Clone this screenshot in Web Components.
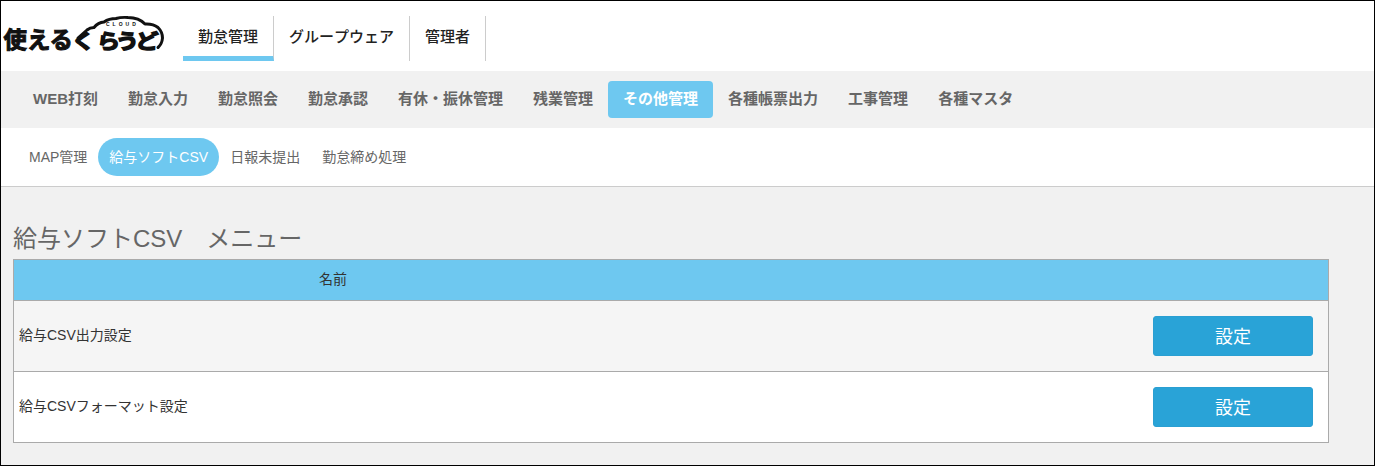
<!DOCTYPE html>
<html lang="ja">
<head>
<meta charset="utf-8">
<title>給与ソフトCSV メニュー</title>
<style>
  html, body { margin: 0; padding: 0; height: 100%; }
  body {
    font-family: "Liberation Sans", "Noto Sans CJK JP", sans-serif;
    background: #f1f1f1;
    color: #333;
  }
</style>
</head>
<body>
<app-shell>
  <app-header slot="header">
    <app-logo slot="logo"></app-logo>
    <header-tab active>勤怠管理</header-tab>
    <header-tab>グループウェア</header-tab>
    <header-tab>管理者</header-tab>
  </app-header>
  <main-nav slot="header">
    <main-nav-item>WEB打刻</main-nav-item>
    <main-nav-item>勤怠入力</main-nav-item>
    <main-nav-item>勤怠照会</main-nav-item>
    <main-nav-item>勤怠承認</main-nav-item>
    <main-nav-item>有休・振休管理</main-nav-item>
    <main-nav-item>残業管理</main-nav-item>
    <main-nav-item active>その他管理</main-nav-item>
    <main-nav-item>各種帳票出力</main-nav-item>
    <main-nav-item>工事管理</main-nav-item>
    <main-nav-item>各種マスタ</main-nav-item>
  </main-nav>
  <sub-nav slot="header">
    <sub-nav-item>MAP管理</sub-nav-item>
    <sub-nav-item active>給与ソフトCSV</sub-nav-item>
    <sub-nav-item>日報未提出</sub-nav-item>
    <sub-nav-item>勤怠締め処理</sub-nav-item>
  </sub-nav>
  <menu-panel heading="給与ソフトCSV　メニュー" column="名前">
    <menu-row>給与CSV出力設定</menu-row>
    <menu-row alt>給与CSVフォーマット設定</menu-row>
  </menu-panel>
</app-shell>

<script>
// small helper, every element gets an open shadow root from a string
function define(name, html) {
  customElements.define(name, class extends HTMLElement {
    constructor() {
      super();
      this.attachShadow({mode: 'open'}).innerHTML = html;
    }
  });
}

define('app-shell', `
  <style>
    :host {
      display: flex;
      flex-direction: column;
      box-sizing: border-box;
      height: 466px;
      border: 1px solid #000;
      overflow: hidden;
      background: #f1f1f1;
    }
  </style>
  <slot name="header"></slot>
  <slot></slot>`);

define('app-header', `
  <style>
    :host {
      display: flex;
      align-items: flex-start;
      height: 70px;
      background: #fff;
    }
    ::slotted(app-logo) { margin: 8px 20px 0 3px; }
    .tabs { display: flex; margin-top: 15px; }
  </style>
  <slot name="logo"></slot>
  <div class="tabs"><slot></slot></div>`);

define('app-logo', `
  <style>
    :host { display: block; width: 159px; height: 52px; flex: none; }
    svg { display: block; overflow: visible; }
    text { font-family: "Noto Sans CJK JP", sans-serif; font-weight: 700; fill: #111; }
  </style>
  <svg width="159" height="52" viewBox="0 -8 159 52">
    <path d="M74 21 L83 13 Q86 10.500 90 10.500 Q94 5.500 100 5 Q105 1.500 112 1.500 Q117 0 124 0.500 Q135 0.500 141 7 Q149 6.500 154 10.500 Q158.500 15 158.500 21 Q158 27 154 30.500"
      fill="#fff" stroke="#111" stroke-width="3" stroke-linejoin="round" stroke-linecap="round"/>
    <text x="-0.500" y="31" font-size="23" stroke="#111" stroke-width="1" textLength="69.500" lengthAdjust="spacingAndGlyphs">使える</text>
    <text transform="translate(71 31.500) scale(1.1 .95)" x="-3 20 37 55" y="0" font-size="21" stroke="#111" stroke-width="1.500">くらうど</text>
    <text x="102" y="9" font-size="5" letter-spacing="3" style="font-family:'Liberation Sans',sans-serif">CLOUD</text>
  </svg>`);

define('header-tab', `
  <style>
    :host {
      display: block;
      box-sizing: border-box;
      height: 45px;
      padding: 0 15px;
      border-right: 1px solid #ccc;
      font: 500 15px/40px "Noto Sans CJK JP", sans-serif;
      font-kerning: none;
      color: #222;
      white-space: nowrap;
    }
    :host([active]) { border-bottom: 5px solid #6ec8f0; }
  </style>
  <slot></slot>`);

define('main-nav', `
  <style>
    :host {
      display: flex;
      align-items: center;
      box-sizing: border-box;
      height: 57px;
      padding: 0 0 0 17px;
      background: #f1f1f1;
    }
  </style>
  <slot></slot>`);

define('main-nav-item', `
  <style>
    :host {
      display: block;
      height: 37px;
      padding: 0 15px;
      border-radius: 4px;
      font: 700 15px/35px "Liberation Sans", "Noto Sans CJK JP", sans-serif;
      color: #666;
      white-space: nowrap;
    }
    :host([active]) { background: #6ec8f0; color: #fff; }
  </style>
  <slot></slot>`);

define('sub-nav', `
  <style>
    :host {
      display: flex;
      align-items: center;
      box-sizing: border-box;
      height: 59px;
      padding: 0 0 1px 17px;
      background: #fff;
      border-bottom: 1px solid #ccc;
    }
  </style>
  <slot></slot>`);

define('sub-nav-item', `
  <style>
    :host {
      display: block;
      height: 38px;
      padding: 0 11px;
      border-radius: 19px;
      font: 400 14px/38px "Liberation Sans", "Noto Sans CJK JP", sans-serif;
      color: #666;
      white-space: nowrap;
    }
    :host([active]) { background: #6ec8f0; color: #fff; }
  </style>
  <slot></slot>`);

customElements.define('menu-panel', class extends HTMLElement {
  constructor() {
    super();
    this.attachShadow({mode: 'open'}).innerHTML = `
      <style>
        :host { display: block; padding: 36px 0 0 12px; }
        h1 {
          margin: 0;
          font: 400 24px/32px "Liberation Sans", "Noto Sans CJK JP", sans-serif;
          height: 36px;
          color: #666;
          white-space: pre;
        }
        .table {
          width: 1316px;
          box-sizing: border-box;
          border: 1px solid #aaa;
        }
        .head {
          display: grid;
          grid-template-columns: 638px 1fr;
          height: 40px;
          background: #6ec8f0;
          border-bottom: 1px solid #aaa;
          font: 400 14px/38px "Liberation Sans", "Noto Sans CJK JP", sans-serif;
          color: #333;
          text-align: center;
        }
      </style>
      <h1></h1>
      <div class="table">
        <div class="head"><span class="name"></span></div>
        <slot></slot>
      </div>`;
  }
  connectedCallback() {
    this.shadowRoot.querySelector('h1').textContent = this.getAttribute('heading');
    this.shadowRoot.querySelector('.name').textContent = this.getAttribute('column');
  }
});

define('menu-row', `
  <style>
    :host {
      display: flex;
      align-items: center;
      justify-content: space-between;
      height: 70px;
      padding: 0 15px 0 5px;
      background: #f5f5f5;
      font: 400 14px "Liberation Sans", "Noto Sans CJK JP", sans-serif;
      color: #333;
      border-bottom: 1px solid #aaa;
    }
    :host([alt]) { background: #fff; border-bottom: 0; }
    .label { padding-bottom: 4px; }
    button {
      width: 160px;
      height: 40px;
      padding: 0 0 2px;
      border: 1px solid #2a9fd2;
      border-radius: 3px;
      background: #29a3d7;
      color: #fff;
      font: 400 18px "Liberation Sans", "Noto Sans CJK JP", sans-serif;
    }
  </style>
  <span class="label"><slot></slot></span>
  <button type="button">設定</button>`);
</script>
</body>
</html>
